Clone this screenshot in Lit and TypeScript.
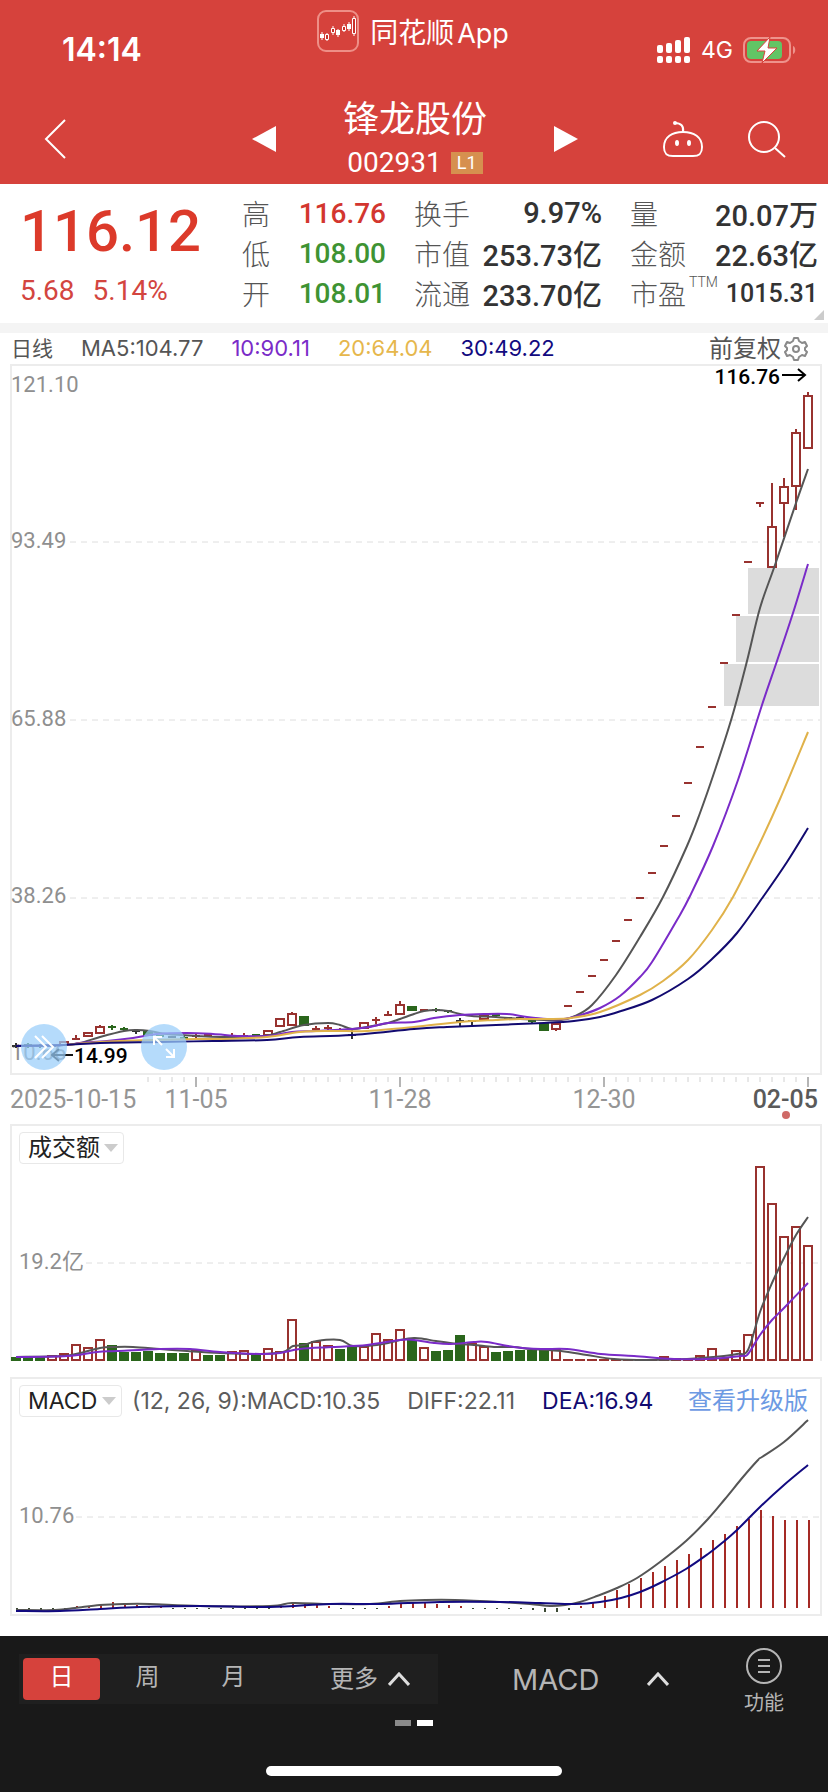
import { LitElement, html, svg, css } from "lit";
import { customElement } from "lit/decorators.js";

type Point = [number, number];
type Tone = "r" | "g" | "d";
/* index, tone, high, low, body top, body bottom */
type Candle = [number, Tone, number, number, number, number];

const RED = "#98322f";
const GREEN = "#2a661c";
const DARK = "#333";
const STEP = 12;
const X0 = 16;
const x = (i: number) => X0 + i * STEP;
const tone = (t: Tone) => (t === "r" ? RED : t === "g" ? GREEN : DARK);

/* Catmull-Rom spline through every sample */
const curve = (p: Point[]) => {
  let d = `M${p[0][0]} ${p[0][1]}`;
  for (let i = 0; i < p.length - 1; i++) {
    const a = p[Math.max(i - 1, 0)];
    const b = p[i];
    const c = p[i + 1];
    const e = p[Math.min(i + 2, p.length - 1)];
    d += `C${b[0] + (c[0] - a[0]) / 6} ${b[1] + (c[1] - a[1]) / 6} ${c[0] - (e[0] - b[0]) / 6} ${c[1] - (e[1] - b[1]) / 6} ${c[0]} ${c[1]}`;
  }
  return d;
};

const candles: Candle[] = [
  [0, "d", 1043, 1048, 1046, 1046], [1, "g", 1043, 1048, 1045, 1046], [2, "g", 1044, 1048, 1046, 1046],
  [3, "g", 1044, 1048, 1046, 1047], [4, "r", 1042, 1045, 1042, 1045], [5, "r", 1035, 1040, 1039, 1039],
  [6, "r", 1033, 1036, 1033, 1036], [7, "r", 1025, 1033, 1027, 1033], [8, "g", 1025, 1030, 1027, 1027],
  [9, "g", 1027, 1031, 1029, 1029], [10, "d", 1029, 1034, 1031, 1031], [11, "g", 1031, 1036, 1031, 1036],
  [12, "g", 1035, 1038, 1036, 1037], [13, "d", 1036, 1038, 1037, 1037], [14, "g", 1036, 1039, 1038, 1038],
  [15, "r", 1034, 1039, 1036, 1036], [16, "r", 1034, 1037, 1035, 1036], [17, "r", 1038, 1041, 1040, 1040],
  [18, "r", 1033, 1039, 1037, 1037], [19, "r", 1033, 1038, 1036, 1036], [20, "g", 1034, 1036, 1035, 1035],
  [21, "r", 1031, 1035, 1031, 1035], [22, "r", 1019, 1026, 1019, 1026], [23, "r", 1012, 1025, 1014, 1025],
  [24, "g", 1016, 1026, 1016, 1026], [25, "r", 1026, 1031, 1029, 1029], [26, "r", 1025, 1030, 1028, 1028],
  [27, "r", 1028, 1031, 1030, 1030], [28, "d", 1030, 1039, 1035, 1035], [29, "r", 1023, 1028, 1023, 1028],
  [30, "r", 1017, 1024, 1020, 1020], [31, "r", 1011, 1016, 1015, 1015], [32, "r", 1001, 1014, 1005, 1014],
  [33, "g", 1006, 1011, 1006, 1011], [34, "r", 1009, 1011, 1010, 1010], [35, "g", 1008, 1012, 1010, 1010],
  [36, "g", 1010, 1013, 1011, 1012], [37, "d", 1018, 1026, 1021, 1021], [38, "d", 1020, 1025, 1021, 1021],
  [39, "r", 1016, 1019, 1016, 1019], [40, "g", 1014, 1017, 1015, 1017], [41, "d", 1017, 1020, 1018, 1018],
  [42, "d", 1017, 1020, 1018, 1018], [43, "g", 1020, 1023, 1021, 1023], [44, "g", 1023, 1031, 1023, 1031],
  [45, "r", 1023, 1031, 1024, 1029], [46, "r", 1006, 1006, 1006, 1006], [47, "r", 992, 992, 992, 992],
  [48, "r", 976, 976, 976, 976], [49, "r", 960, 960, 960, 960], [50, "r", 941, 941, 941, 941],
  [51, "r", 920, 920, 920, 920], [52, "r", 898, 898, 898, 898], [53, "r", 873, 873, 873, 873],
  [54, "r", 846, 846, 846, 846], [55, "r", 816, 816, 816, 816], [56, "r", 783, 783, 783, 783],
  [57, "r", 747, 747, 747, 747], [58, "r", 707, 707, 707, 707], [59, "r", 663, 663, 663, 663],
  [60, "r", 615, 615, 615, 615], [61, "r", 562, 562, 562, 562], [62, "r", 503, 507, 503, 503],
  [63, "r", 483, 567, 527, 567], [64, "r", 478, 537, 487, 503], [65, "r", 429, 510, 433, 486],
  [66, "r", 392, 448, 396, 448],
];

const ma5: Point[] = [[16, 1046], [64, 1045], [80, 1043], [100, 1037], [124, 1031], [137, 1030], [150, 1031], [167, 1034], [196, 1036], [220, 1037], [263, 1036], [280, 1032], [304, 1025], [328, 1023], [340, 1025], [352, 1029], [367, 1027], [388, 1023], [400, 1019], [414, 1014], [424, 1011], [436, 1010], [448, 1011], [460, 1014], [472, 1016], [496, 1017], [520, 1019], [544, 1020], [561, 1020], [575, 1016], [592, 1005], [616, 975], [640, 937], [663, 897], [687, 846], [700, 813], [715, 770], [732, 717], [747, 661], [760, 608], [775, 565], [796, 503], [808, 469]];
const ma10: Point[] = [[16, 1046], [64, 1045], [80, 1043], [107, 1041], [133, 1038], [157, 1034], [187, 1033], [213, 1034], [240, 1036], [267, 1036], [292, 1032], [316, 1031], [352, 1029], [370, 1027], [388, 1023], [414, 1022], [434, 1018], [460, 1015], [484, 1014], [507, 1014], [527, 1017], [547, 1019], [564, 1019], [581, 1015], [600, 1008], [620, 996], [640, 977], [652, 962], [677, 920], [690, 896], [713, 846], [738, 780], [762, 705], [777, 661], [793, 613], [808, 564]];
const ma20: Point[] = [[64, 1045], [100, 1042], [150, 1040], [197, 1039], [220, 1039], [267, 1037], [300, 1032], [333, 1031], [367, 1031], [414, 1027], [460, 1022], [496, 1020], [520, 1019], [547, 1019], [571, 1018], [600, 1012], [640, 995], [663, 981], [688, 960], [712, 930], [733, 897], [758, 847], [780, 799], [808, 732]];
const ma30: Point[] = [[16, 1046], [64, 1045], [100, 1043], [160, 1042], [213, 1041], [267, 1040], [300, 1037], [352, 1035], [414, 1029], [447, 1027], [496, 1025], [544, 1023], [574, 1021], [600, 1017], [621, 1011], [652, 1000], [688, 979], [712, 959], [737, 933], [763, 897], [787, 862], [808, 828]];

const volume: [Tone, number][] = [
  ["g", 4], ["g", 4], ["g", 4], ["r", 5], ["r", 7], ["r", 16], ["r", 13], ["r", 21], ["g", 16], ["g", 9],
  ["g", 9], ["g", 10], ["g", 8], ["g", 8], ["g", 8], ["r", 11], ["g", 6], ["g", 6], ["r", 9], ["r", 10],
  ["g", 7], ["r", 12], ["r", 9], ["r", 41], ["g", 18], ["r", 19], ["r", 15], ["g", 12], ["g", 14], ["r", 14],
  ["r", 27], ["r", 21], ["r", 31], ["g", 21], ["r", 13], ["g", 10], ["g", 11], ["g", 26], ["r", 17], ["r", 14],
  ["g", 9], ["g", 10], ["g", 11], ["g", 11], ["g", 11], ["r", 11], ["r", 2], ["r", 2], ["r", 2], ["r", 2],
  ["r", 2], ["r", 2], ["r", 2], ["r", 2], ["r", 4], ["r", 3], ["r", 2], ["r", 5], ["r", 12], ["r", 3],
  ["r", 10], ["r", 26], ["r", 194], ["r", 157], ["r", 124], ["r", 134], ["r", 115],
];
const vol5: Point[] = [[16, 1357], [63, 1356], [80, 1353], [100, 1348], [115, 1347], [133, 1347], [160, 1349], [187, 1351], [220, 1353], [260, 1354], [283, 1352], [293, 1346], [304, 1345], [317, 1341], [340, 1340], [353, 1346], [377, 1345], [388, 1343], [400, 1340], [414, 1338], [424, 1339], [436, 1341], [457, 1344], [474, 1345], [494, 1347], [514, 1347], [531, 1349], [561, 1351], [587, 1355], [614, 1359], [647, 1360], [687, 1359], [724, 1356], [737, 1354], [748, 1350], [760, 1312], [772, 1283], [784, 1258], [796, 1235], [808, 1217]];
const vol10: Point[] = [[16, 1357], [67, 1356], [97, 1352], [117, 1351], [160, 1349], [190, 1349], [220, 1352], [260, 1354], [280, 1353], [300, 1349], [333, 1347], [367, 1345], [400, 1340], [414, 1340], [434, 1343], [451, 1344], [474, 1342], [487, 1342], [514, 1347], [541, 1349], [567, 1349], [601, 1354], [634, 1356], [674, 1359], [707, 1359], [741, 1356], [748, 1354], [760, 1335], [772, 1320], [784, 1308], [808, 1283]];

const histogram: number[] = [
  -2, -2, -2, -2, -2, 2, 2, 4, 6, 4, 3, 2, 1, -1, -1, -1, -1, -1, -1, -1, -1, -1, 2, 4, 4, 3, 2,
  -1, -1, -1, -1, 2, 4, 5, 5, 4, 3, 2, -1, -1, -1, -1, -1, -2, -4, -4, -2, 2, 6, 12, 18, 24, 30, 36,
  42, 48, 54, 60, 68, 74, 82, 89, 98, 92, 88, 88, 88,
];
const diff: Point[] = [[16, 1610], [55, 1610], [75, 1608], [100, 1605], [124, 1604], [150, 1604], [200, 1606], [270, 1606], [292, 1603], [330, 1604], [370, 1604], [400, 1601], [425, 1600], [455, 1600], [500, 1602], [530, 1604], [550, 1606], [565, 1605], [580, 1602], [597, 1596], [617, 1588], [637, 1578], [660, 1562], [686, 1541], [708, 1519], [725, 1499], [743, 1477], [758, 1460], [762, 1457], [784, 1442], [808, 1420]];
const dea: Point[] = [[16, 1611], [60, 1611], [100, 1609], [140, 1607], [200, 1606], [270, 1607], [330, 1604], [380, 1604], [440, 1602], [500, 1602], [540, 1603], [575, 1604], [600, 1602], [621, 1598], [640, 1592], [660, 1583], [686, 1569], [708, 1554], [722, 1543], [737, 1530], [760, 1507], [784, 1485], [808, 1465]];

const drawCandle = ([i, t, hi, lo, top, bot]: Candle) => {
  const c = tone(t);
  const cx = x(i);
  if (bot - top < 3) {
    return svg`<line x1=${cx} x2=${cx} y1=${hi} y2=${lo} stroke=${c} stroke-width="2" />
      <rect x=${cx - 4} y=${top - 1} width="8" height="2" fill=${c} />`;
  }
  return svg`<line x1=${cx} x2=${cx} y1=${hi} y2=${top} stroke=${c} stroke-width="2" />
    <line x1=${cx} x2=${cx} y1=${bot} y2=${lo} stroke=${c} stroke-width="2" />
    ${t === "g"
      ? svg`<rect x=${cx - 5} y=${top} width="10" height=${bot - top} fill=${c} />`
      : svg`<rect x=${cx - 4} y=${top} width="8" height=${bot - top} fill="#fff" stroke=${c} stroke-width="2" />`}`;
};

const grid = (y: number, from: number) =>
  svg`<line x1=${from} x2="820" y1=${y} y2=${y} stroke="#dedede" stroke-width="1" stroke-dasharray="6 5" />`;

const line = (p: Point[], c: string) =>
  svg`<path d=${curve(p)} fill="none" stroke=${c} stroke-width="2" />`;

const quotes = [
  [["高", "116.76", "up"], ["低", "108.00", "down"], ["开", "108.01", "down"]],
  [["换手", "9.97%", "big"], ["市值", "253.73亿", "big"], ["流通", "233.70亿", "big"]],
  [["量", "20.07万", "big"], ["金额", "22.63亿", "big"], ["市盈", "1015.31", "small"]],
];

@customElement("price-chart")
export class PriceChart extends LitElement {
  static styles = css`
    :host { display: grid; }
    svg.plot { grid-area: 1 / 1; width: 100%; height: auto; display: block; }
    text { font-family: Roboto, "Noto Sans CJK SC", sans-serif; }
    .tick { font-size: 22px; fill: #8f8f8f; }
    .date { font-size: 25px; fill: #959595; }
    .last { font-weight: 500; fill: #5a5a5a; }
    .mark { font-size: 21px; font-weight: 500; fill: #000; }
    .tools { grid-area: 1 / 1; align-self: end; justify-self: start; display: flex; gap: 74px; padding: 0 0 54px 21px; }
    button { width: 46px; height: 46px; padding: 0; border: 0; border-radius: 50%; background: rgba(152, 205, 250, 0.72); display: grid; place-items: center; }
  `;

  render() {
    return html`
      <svg class="plot" viewBox="0 364 828 760" role="img" aria-label="日线">
        <rect x="11" y="365" width="810" height="709" fill="none" stroke="#ececec" stroke-width="2" />
        ${grid(542, 70)} ${grid(720, 70)} ${grid(898, 70)}
        <g fill="#dcdcdc">
          <rect x="748" y="568" width="71" height="46" />
          <rect x="736" y="616" width="83" height="46" />
          <rect x="724" y="664" width="95" height="42" />
        </g>
        <text class="tick" x="11" y="392">121.10</text>
        <text class="tick" x="11" y="548">93.49</text>
        <text class="tick" x="11" y="726">65.88</text>
        <text class="tick" x="11" y="903">38.26</text>
        <text class="tick" x="11" y="1060">10.66</text>
        ${candles.map(drawCandle)}
        ${line(ma5, "#555")} ${line(ma10, "#7a2bc8")} ${line(ma20, "#e0b24a")} ${line(ma30, "#120a70")}
        <text class="mark" x="780" y="384" text-anchor="end">116.76</text>
        <path d="M782 375H805M798 369L805 375L798 381" fill="none" stroke="#000" stroke-width="2" />
        <path d="M73 1055H52M59 1049L52 1055L59 1061" fill="none" stroke="#111" stroke-width="2" />
        <text class="mark" x="74" y="1063">14.99</text>
        ${candles.slice(11).map(([i]) => {
          const major = (i - 15) % 17 === 0;
          return svg`<line x1=${x(i)} x2=${x(i)} y1="1077" y2=${major ? 1087 : 1082}
            stroke=${major ? "#b5b5b5" : "#d0d0d0"} stroke-width=${major ? 2 : 1} />`;
        })}
        <text class="date" x="10" y="1108">2025-10-15</text>
        <text class="date" x="196" y="1108" text-anchor="middle">11-05</text>
        <text class="date" x="400" y="1108" text-anchor="middle">11-28</text>
        <text class="date" x="604" y="1108" text-anchor="middle">12-30</text>
        <text class="date last" x="818" y="1108" text-anchor="end">02-05</text>
        <circle cx="786" cy="1115" r="4" fill="#cf6a67" />
      </svg>
      <div class="tools">
        <button aria-label="快进">
          <svg width="28" height="28" viewBox="0 0 28 28" fill="none" stroke="#fff" stroke-width="2">
            <path d="M5 3L16 14L5 25M12 3L23 14L12 25" />
          </svg>
        </button>
        <button aria-label="全屏">
          <svg width="28" height="28" viewBox="0 0 28 28" fill="none" stroke="#fff" stroke-width="2">
            <path d="M12 12L4 4M4 12V4H12M16 16L24 24M24 16V24H16" />
          </svg>
        </button>
      </div>
    `;
  }
}

@customElement("indicator-panels")
export class IndicatorPanels extends LitElement {
  static styles = css`
    :host { display: block; }
    .panel { display: grid; }
    svg.plot { grid-area: 1 / 1; width: 100%; height: auto; display: block; }
    text { font-family: Roboto, "Noto Sans CJK SC", sans-serif; font-size: 22px; fill: #8f8f8f; }
    .head { grid-area: 1 / 1; align-self: start; display: flex; align-items: center; padding: 8px 20px 0 19px; font: 23px/32px Inter, "Noto Sans CJK SC", sans-serif; color: #5c5c5c; white-space: nowrap; }
    .pick { display: flex; align-items: center; gap: 4px; height: 30px; padding: 0 5px 0 8px; border: 1px solid #e8e8e8; border-radius: 4px; background: #fff; color: #222; }
    select { appearance: none; border: 0; padding: 0; margin: 0; background: none; color: inherit; font: inherit; }
    .cjk select { font-size: 24px; }
    .pick::after { content: ""; border: 7px solid transparent; border-top: 8px solid #ccc; border-bottom: 0; }
    .params { margin-left: 10px; }
    .diff, .dea { margin-left: 27px; }
    .dea { color: #120a70; }
    a { margin-left: auto; font-size: 24px; color: #6d9ae3; text-decoration: none; }
  `;

  render() {
    return html`
      <section class="panel">
        <svg class="plot" viewBox="0 1124 828 253" role="img" aria-label="成交额">
          <path d="M11 1361V1125H821V1361" fill="none" stroke="#ececec" stroke-width="2" />
          ${grid(1263, 86)}
          <text x="19" y="1269">19.2亿</text>
          ${volume.map(([t, h], i) =>
            t === "g"
              ? svg`<rect x=${x(i) - 5} y=${1361 - h} width="10" height=${h} fill=${GREEN} />`
              : h < 4
                ? svg`<rect x=${x(i) - 5} y=${1361 - h} width="10" height=${h} fill=${RED} />`
                : svg`<rect x=${x(i) - 4} y=${1361 - h} width="8" height=${h - 1} fill="#fff" stroke=${RED} stroke-width="2" />`
          )}
          ${line(vol5, "#555")} ${line(vol10, "#7a2bc8")}
        </svg>
        <div class="head">
          <label class="pick cjk"><select aria-label="副图指标一"><option>成交额</option></select></label>
        </div>
      </section>
      <section class="panel">
        <svg class="plot" viewBox="0 1377 828 259" role="img" aria-label="MACD">
          <rect x="11" y="1378" width="810" height="237" fill="none" stroke="#ececec" stroke-width="2" />
          ${grid(1517, 76)}
          <text x="19" y="1523">10.76</text>
          ${histogram.map(
            (h, i) => svg`<rect x=${x(i)} y=${h > 0 ? 1608 - h : 1608} width="2" height=${Math.abs(h)}
              fill=${h > 0 ? "#a52a25" : "#3d4a35"} />`
          )}
          ${line(diff, "#555")} ${line(dea, "#120a80")}
        </svg>
        <div class="head">
          <label class="pick"><select aria-label="副图指标二"><option>MACD</option></select></label>
          <span class="params">(12, 26, 9):MACD:10.35</span>
          <span class="diff">DIFF:22.11</span>
          <span class="dea">DEA:16.94</span>
          <a href="#upgrade">查看升级版</a>
        </div>
      </section>
    `;
  }
}

@customElement("app-root")
export class AppRoot extends LitElement {
  static styles = css`
    :host { display: flex; flex-direction: column; min-height: 100vh; background: #fff; font-family: Inter, "Noto Sans CJK SC", sans-serif; color: #333; }
    * { box-sizing: border-box; }
    button { border: 0; padding: 0; background: none; color: inherit; font: inherit; display: grid; place-items: center; }
    svg { display: block; }
    header { background: #d6423c; color: #fff; }
    .status { display: grid; grid-template-columns: 1fr auto 1fr; height: 94px; padding: 10px 32px 0 62px; }
    .time { font-size: 32px; line-height: 40px; font-weight: 600; padding-top: 20px; }
    .brand { display: flex; align-items: center; gap: 11px; height: 42px; margin-right: 32px; }
    .cn { font-size: 28px; margin-right: 3px; }
    .name { font-size: 27px; }
    .signals { display: flex; justify-content: flex-end; align-items: center; gap: 10px; height: 80px; font-size: 23px; }
    .nav { display: grid; grid-template-columns: 1fr auto 1fr; align-items: center; height: 90px; padding: 0 42px 0 44px; }
    .back { justify-self: start; }
    .stock { display: flex; align-items: center; gap: 67px; }
    .title { display: grid; justify-items: center; }
    h1 { margin: 0; font-size: 36px; line-height: 48px; font-weight: 400; }
    .code { display: flex; align-items: center; gap: 9px; font: 28px/40px Roboto, sans-serif; }
    .level { width: 32px; font: 18px/22px Roboto, sans-serif; text-align: center; background: #d6904f; }
    .actions { display: flex; gap: 45px; justify-self: end; }

    .quote { position: relative; display: grid; grid-template-columns: 194px 144px 1fr 1fr; gap: 28px; padding: 9px 10px 10px 20px; border-bottom: 10px solid #f4f4f4; font-family: Roboto, "Noto Sans CJK SC", sans-serif; }
    .price { font-size: 58px; line-height: 76px; font-weight: 500; color: #dc3a2a; }
    .change { display: flex; gap: 18px; font-size: 28px; line-height: 44px; color: #d3453f; }
    dl { margin: 0; }
    .row { display: flex; justify-content: space-between; align-items: center; height: 40px; white-space: nowrap; }
    dt { font-size: 28px; font-weight: 300; color: #555; display: flex; }
    dd { margin: 0; font-size: 28px; font-weight: 500; }
    .ttm { font-size: 14px; line-height: 18px; margin-left: 3px; }
    .up { color: #d3362f; }
    .down { color: #3e9333; }
    .big { font-size: 29px; }
    .small { font-size: 25px; }
    .corner { position: absolute; right: 4px; bottom: 3px; border: 5px solid #ccc; border-top-color: transparent; border-left-color: transparent; }

    .legend { display: flex; align-items: center; height: 31px; padding: 0 20px 0 11px; gap: 28px; font-size: 22px; line-height: 31px; white-space: nowrap; color: #555; }
    .period { font-size: 21px; }
    .m10 { color: #7a2bc8; }
    .m20 { color: #e6b74c; }
    .m30 { color: #120a80; }
    .adjust { margin-left: auto; display: flex; align-items: center; gap: 3px; font-size: 24px; }

    footer { margin-top: auto; background: #191919; color: #b5b5b5; height: 156px; display: flex; flex-direction: column; align-items: center; }
    .bar { align-self: stretch; display: flex; height: 84px; padding-left: 19px; padding-right: 44px; }
    .periods { display: flex; align-items: center; width: 419px; height: 50px; margin-top: 18px; padding: 0 4px; background: #1f1f1f; font-size: 24px; line-height: 38px; }
    .tab { width: 77px; height: 42px; border-radius: 4px; margin-right: 9px; align-content: start; }
    .on { background: #d6423c; color: #fff; }
    .more { display: flex; align-items: center; gap: 10px; margin-left: auto; margin-right: 24px; }
    .index { display: flex; align-items: center; gap: 48px; height: 50px; margin-top: 18px; margin-left: 74px; font-size: 29px; }
    .func { display: grid; justify-items: center; align-content: start; gap: 4px; margin-left: auto; padding-top: 12px; font-size: 20px; line-height: 30px; }
    .pages { display: flex; gap: 6px; }
    .page { width: 16px; height: 6px; background: #8a8a8a; }
    .now { background: #fff; }
    .home { width: 296px; height: 10px; border-radius: 5px; margin-top: 40px; background: #fff; }
  `;

  private chevron() {
    return html`<svg width="22" height="14" viewBox="0 0 22 14" fill="none" stroke="#ddd" stroke-width="3"><path d="M1 13L11 2L21 13" /></svg>`;
  }

  render() {
    return html`
      <header>
        <div class="status">
          <span class="time">14:14</span>
          <div class="brand">
            <svg width="42" height="42" viewBox="0 0 42 42" fill="none">
              <rect x="1" y="1" width="40" height="40" rx="8" stroke="#ee8f87" stroke-width="2" />
              <path d="M5 22V30M10 23V31M16 16V25M21 19V27M27 14V22M32 12V21M37 6V26" stroke="#fff" />
              <path d="M3 24H7V28H3ZM19 20H23V25H19ZM30 14H34V19H30Z" fill="#fff" />
              <path d="M8.500 24.500H11.500V29.500H8.500ZM14.500 18.500H17.500V22.500H14.500ZM25.500 16.500H28.500V20.500H25.500ZM35.500 8.500H38.500V23.500H35.500Z" fill="#c9302b" stroke="#fff" />
            </svg>
            <span><span class="cn">同花顺</span><span class="name">App</span></span>
          </div>
          <div class="signals">
            <svg width="34" height="26" viewBox="0 0 34 26" fill="#fff">
              <rect x="0" y="8" width="6" height="8" rx="2" /><rect x="9" y="6" width="6" height="10" rx="2" />
              <rect x="18" y="3" width="6" height="13" rx="2" /><rect x="27" y="0" width="6" height="16" rx="2" />
              <rect x="0" y="19" width="6" height="7" rx="2" /><rect x="9" y="19" width="6" height="7" rx="2" />
              <rect x="18" y="19" width="6" height="7" rx="2" /><rect x="27" y="19" width="6" height="7" rx="2" />
            </svg>
            <span>4G</span>
            <svg width="53" height="26" viewBox="0 0 53 26">
              <rect x="1" y="1" width="46" height="24" rx="7" fill="none" stroke="#ee938c" stroke-width="2" />
              <path d="M50 9C53 10 53 16 50 17Z" fill="#ee938c" />
              <rect x="4" y="4" width="35" height="18" rx="4" fill="#62c465" />
              <path d="M27 0L14 14H22L19 26L34 11H25Z" fill="#fff" stroke="#d6423c" stroke-width="1" />
            </svg>
          </div>
        </div>
        <nav class="nav">
          <button class="back" aria-label="返回">
            <svg width="23" height="40" viewBox="0 0 23 40" fill="none" stroke="#fff" stroke-width="2"><path d="M21 1L2 20L21 39" /></svg>
          </button>
          <div class="stock">
            <button aria-label="上一只"><svg width="24" height="26" viewBox="0 0 24 26" fill="#fff"><path d="M24 0V26L0 13Z" /></svg></button>
            <div class="title">
              <h1>锋龙股份</h1>
              <div class="code">002931<span class="level">L1</span></div>
            </div>
            <button aria-label="下一只"><svg width="24" height="26" viewBox="0 0 24 26" fill="#fff"><path d="M0 0V26L24 13Z" /></svg></button>
          </div>
          <div class="actions">
            <button aria-label="智能助手">
              <svg width="40" height="38" viewBox="0 0 40 38" fill="none" stroke="#fff" stroke-width="2">
                <path d="M12 3C18 3 21 6 20 12" />
                <circle cx="12" cy="3" r="2" fill="#fff" stroke="none" />
                <path d="M20 12C31 12 39 17 39 27C39 34 36 36 30 36H10C4 36 1 34 1 27C1 17 9 12 20 12Z" />
                <ellipse cx="14" cy="23" rx="2" ry="3" fill="#fff" stroke="none" />
                <ellipse cx="26" cy="23" rx="2" ry="3" fill="#fff" stroke="none" />
              </svg>
            </button>
            <button aria-label="搜索">
              <svg width="38" height="38" viewBox="0 0 38 38" fill="none" stroke="#fff" stroke-width="2">
                <circle cx="16" cy="17" r="15" /><path d="M27 28L37 37" />
              </svg>
            </button>
          </div>
        </nav>
      </header>

      <section class="quote">
        <div>
          <div class="price">116.12</div>
          <div class="change"><span>5.68</span><span>5.14%</span></div>
        </div>
        ${quotes.map(
          (col) => html`<dl>
            ${col.map(
              ([k, v, c]) => html`<div class="row">
                <dt>${k}${k === "市盈" ? html`<span class="ttm">TTM</span>` : ""}</dt>
                <dd class=${c}>${v}</dd>
              </div>`
            )}
          </dl>`
        )}
        <i class="corner"></i>
      </section>

      <div class="legend">
        <span class="period">日线</span>
        <span>MA5:104.77</span>
        <span class="m10">10:90.11</span>
        <span class="m20">20:64.04</span>
        <span class="m30">30:49.22</span>
        <button class="adjust">
          前复权
          <svg width="24" height="24" viewBox="0 0 24 24" fill="none" stroke="#8a8a8a" stroke-width="2" stroke-linejoin="round">
            <path d="M9 4L10 1H14L15 4L18 6L21 5L23 9L21 11V13L23 15L21 19L18 18L15 20L14 23H10L9 20L6 18L3 19L1 15L3 13V11L1 9L3 5L6 6Z" />
            <circle cx="12" cy="12" r="3" />
          </svg>
        </button>
      </div>

      <price-chart></price-chart>
      <indicator-panels></indicator-panels>

      <footer>
        <div class="bar">
          <div class="periods">
            <button class="tab on">日</button>
            <button class="tab">周</button>
            <button class="tab">月</button>
            <button class="more">更多${this.chevron()}</button>
          </div>
          <button class="index">MACD${this.chevron()}</button>
          <button class="func">
            <svg width="36" height="36" viewBox="0 0 36 36" fill="none" stroke="#b5b5b5" stroke-width="2">
              <circle cx="18" cy="18" r="17" /><path d="M12 12H24M12 18H24M12 24H24" />
            </svg>
            功能
          </button>
        </div>
        <div class="pages"><i class="page"></i><i class="page now"></i></div>
        <div class="home"></div>
      </footer>
    `;
  }
}
